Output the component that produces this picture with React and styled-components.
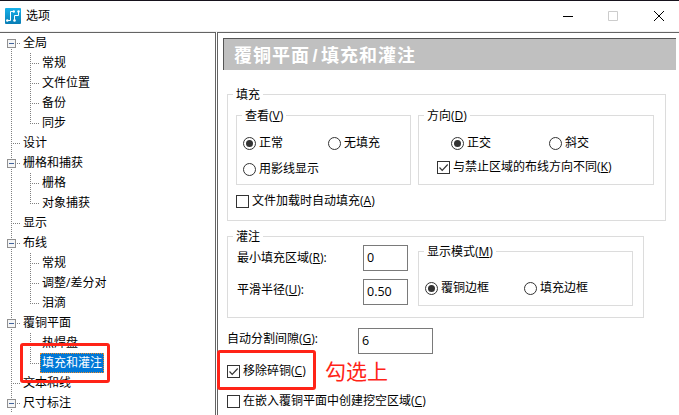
import React, { useState } from 'react'
import styled, { createGlobalStyle } from 'styled-components'

const GlobalStyle = createGlobalStyle`
  * {
    box-sizing: border-box;
  }
  body {
    margin: 0;
    background: #fff;
    overflow: hidden;
    font-family: 'Open Sans', 'Noto Sans CJK SC', sans-serif;
    font-size: 12px;
    color: #000;
  }
`

const Window = styled.div`
  position: relative;
  width: 679px;
  height: 415px;
  overflow: hidden;
  border-top: 1px solid #16121c;
`

const TitleBar = styled.header`
  display: flex;
  align-items: center;
  height: 31px;
  padding-left: 5px;
  border-bottom: 1px solid #f0f0f0;
`

const Title = styled.span`
  flex: 1;
  margin-left: 5px;
  line-height: 16px;
`

const WindowButton = styled.button`
  display: flex;
  width: 46px;
  height: 28px;
  padding: 0 0 0 ${(p) => p.$shift || 0}px;
  border: 0;
  background: none;
  align-items: center;
  justify-content: center;

  &:last-child {
    width: 43px;
  }
`

const Content = styled.div`
  display: flex;
  gap: 1px;
  height: 383px;
`

const Tree = styled.nav`
  width: 216px;
  border-top: 1px solid #646464;
  border-right: 1px solid #646464;
  overflow: hidden;
`

const TreeRow = styled.div`
  display: flex;
  align-items: center;
  height: 20px;
`

const TreeText = styled.span`
  height: 20px;
  margin-left: ${(p) => (p.$child ? 0 : 1)}px;
  padding: 0 1px;
  line-height: 18px;
  white-space: nowrap;
  border: 1px ${(p) => (p.$selected ? 'dotted #f08a28' : 'solid transparent')};
  background: ${(p) => (p.$selected ? '#0078d7' : 'none')};
  color: ${(p) => (p.$selected ? '#fff' : '#000')};
`

const Page = styled.main`
  flex: 1;
  padding: 5px 3px 0 5px;
  border-top: 1px solid #646464;
  border-left: 1px solid #646464;
`

const Banner = styled.h1`
  height: 32px;
  margin: 0 0 24px;
  padding-left: 10px;
  border-top: 1px solid #555;
  border-left: 1px solid #555;
  background: #c0c0c0;
  color: #fff;
  font-family: 'Liberation Sans', 'Noto Sans CJK SC', sans-serif;
  font-size: 18px;
  font-weight: 700;
  line-height: 35px;
  letter-spacing: 1px;
  word-spacing: -3.5px;
  white-space: nowrap;
`

const Form = styled.div`
  padding-left: 4px;
`

const Group = styled.section`
  width: ${(p) => p.$w}px;
  height: ${(p) => p.$h}px;
  padding-left: 8px;
  border: 1px solid #dcdcdc;
`

const Legend = styled.div`
  width: fit-content;
  height: 16px;
  margin: -8px 0 0 -3px;
  padding: 0 3px;
  line-height: 16px;
  background: #fff;
  white-space: nowrap;
`

const Columns = styled.div`
  display: flex;
  gap: ${(p) => p.$gap || 0}px;
  margin-top: ${(p) => p.$top || 0}px;
`

const Line = styled.div`
  display: flex;
  align-items: center;
  height: ${(p) => p.$h || 16}px;
  margin-top: ${(p) => p.$top || 0}px;
  padding-left: ${(p) => p.$left || 0}px;
`

const Option = styled.label`
  display: flex;
  align-items: center;
  gap: 3px;
  width: ${(p) => (p.$w ? p.$w + 'px' : 'auto')};
  height: 16px;
  line-height: 16px;
  white-space: nowrap;
`

// radio rows start a little further left than the legend text
const RadioLine = styled(Line)`
  margin-left: -2px;
`

const Label = styled.label`
  width: ${(p) => p.$w}px;
  padding-bottom: ${(p) => p.$lift || 0}px;
  line-height: 16px;
  white-space: nowrap;
`

const Input = styled.input`
  width: ${(p) => p.$w}px;
  height: 26px;
  padding: 0 0 2px 3px;
  border: 1px solid #7a7a7a;
  outline: 0;
  font: 12.5px 'Open Sans', sans-serif;
  color: #000;
`

const Marker = styled.div`
  position: absolute;
  left: ${(p) => p.$x}px;
  top: ${(p) => p.$y}px;
  width: ${(p) => p.$w}px;
  height: ${(p) => p.$h}px;
  border: 3px solid #ff2317;
  border-radius: 3px;
`

const Note = styled.div`
  position: absolute;
  left: 325px;
  top: 354px;
  color: #ff2317;
  font-size: 21px;
  line-height: 32px;
`

const Logo = () => (
  <svg width="16" height="16" viewBox="0 0 16 16">
    <defs>
      <linearGradient id="logo" x1="0" y1="0" x2="0" y2="1">
        <stop offset="0" stopColor="#16b1ea" />
        <stop offset="1" stopColor="#087db5" />
      </linearGradient>
    </defs>
    <rect width="16" height="16" rx="1" fill="url(#logo)" />
    <path d="M2 12.500h3.500V3.500h3M9.500 12.500V7.500h4V4" fill="none" stroke="#fff" />
    <circle cx="2.300" cy="12.500" r="1.200" fill="#fff" />
    <circle cx="9.500" cy="12.500" r="1.300" fill="#fff" />
    <circle cx="8.800" cy="3.500" r="1.200" fill="#fff" />
    <circle cx="13.500" cy="3.500" r="1.200" fill="#fff" />
  </svg>
)

// dotted connectors and the expander in front of a tree item
const Branch = ({ child, open, first, last }) => (
  <svg width={child ? 40 : 20} height="20" shapeRendering="crispEdges">
    <g stroke="#808080" strokeDasharray="1 1" fill="none">
      <path d={`M11.5 ${first ? 10 : 0}V20`} />
      {child && <path d={`M30.5 0V${last ? 10 : 20}M30 10.500H39`} />}
      {!child && <path d="M11 10.500H20" />}
    </g>
    {open && (
      <>
        <rect x="7.500" y="6.500" width="8" height="8" rx="1" fill="#f5f5f5" stroke="#919191" />
        <path d="M9 10.500h5" stroke="#41639b" />
      </>
    )}
  </svg>
)

const RadioMark = ({ on }) => (
  <svg width="13" height="13">
    <circle cx="6.500" cy="6.500" r="6" fill="#fff" stroke="#333" />
    {on && <circle cx="6.500" cy="6.500" r="3.500" fill="#333" />}
  </svg>
)

const CheckMark = ({ on }) => (
  <svg width="13" height="13">
    <rect x="0.500" y="0.500" width="12" height="12" fill="#fff" stroke="#333" />
    {on && <path d="M2.500 6.500l2.700 2.800L10.700 3.500" fill="none" stroke="#333" strokeWidth="1.200" />}
  </svg>
)

const Key = ({ k }) => (
  <>
    (<u>{k}</u>)
  </>
)

const items = [
  { text: '全局', open: true, first: true },
  { text: '常规', child: true },
  { text: '文件位置', child: true },
  { text: '备份', child: true },
  { text: '同步', child: true, last: true },
  { text: '设计' },
  { text: '栅格和捕获', open: true },
  { text: '栅格', child: true },
  { text: '对象捕获', child: true, last: true },
  { text: '显示' },
  { text: '布线', open: true },
  { text: '常规', child: true },
  { text: '调整/差分对', child: true },
  { text: '泪滴', child: true, last: true },
  { text: '覆铜平面', open: true },
  { text: '热焊盘', child: true },
  { text: '填充和灌注', child: true, last: true },
  { text: '文本和线' },
  { text: '尺寸标注', open: true },
]

const App = () => {
  const [selected, setSelected] = useState(16)
  const [view, setView] = useState(0)
  const [direction, setDirection] = useState(0)
  const [mode, setMode] = useState(0)
  const [checks, setChecks] = useState({ K: true, A: false, C: true, hole: false })
  const toggle = (name) => setChecks({ ...checks, [name]: !checks[name] })

  return (
    <>
      <GlobalStyle />
      <Window>
        <TitleBar>
          <Logo />
          <Title>选项</Title>
          <WindowButton $shift={2}>
            <svg width="10" height="10" stroke="#000">
              <path d="M0 5.500h10" />
            </svg>
          </WindowButton>
          <WindowButton>
            <svg width="10" height="10" stroke="#ccc" fill="none">
              <path d="M.5 .5h9v9h-9z" />
            </svg>
          </WindowButton>
          <WindowButton $shift={3}>
            <svg width="10" height="10" stroke="#000">
              <path d="M0 0l10 10M10 0L0 10" />
            </svg>
          </WindowButton>
        </TitleBar>
        <Content>
          <Tree>
            {items.map((item, i) => (
              <TreeRow key={i} onClick={() => setSelected(i)}>
                <Branch {...item} />
                <TreeText $child={item.child} $selected={i === selected}>
                  {item.text}
                </TreeText>
              </TreeRow>
            ))}
          </Tree>
          <Page>
            <Banner>覆铜平面 / 填充和灌注</Banner>
            <Form>
              <Group $w={439} $h={127}>
                <Legend>填充</Legend>
                <Columns $top={12} $gap={7}>
                  <Group $w={175} $h={70}>
                    <Legend>查看<Key k="V" /></Legend>
                    <RadioLine $top={11}>
                      <Option $w={85} onClick={() => setView(0)}><RadioMark on={view === 0} />正常</Option>
                      <Option onClick={() => setView(1)}><RadioMark on={view === 1} />无填充</Option>
                    </RadioLine>
                    <RadioLine $top={10}>
                      <Option onClick={() => setView(2)}><RadioMark on={view === 2} />用影线显示</Option>
                    </RadioLine>
                  </Group>
                  <Group $w={236} $h={70}>
                    <Legend>方向<Key k="D" /></Legend>
                    <RadioLine $top={11} $left={26}>
                      <Option $w={98} onClick={() => setDirection(0)}><RadioMark on={direction === 0} />正交</Option>
                      <Option onClick={() => setDirection(1)}><RadioMark on={direction === 1} />斜交</Option>
                    </RadioLine>
                    <Line $top={8} $left={10}>
                      <Option onClick={() => toggle('K')}>
                        <CheckMark on={checks.K} />
                        <span>与禁止区域的布线方向不同<Key k="K" /></span>
                      </Option>
                    </Line>
                  </Group>
                </Columns>
                <Line $top={8}>
                  <Option onClick={() => toggle('A')}>
                    <CheckMark on={checks.A} />
                    <span>文件加载时自动填充<Key k="A" /></span>
                  </Option>
                </Line>
              </Group>

              <Columns $top={15}>
                <Group $w={417} $h={82}>
                  <Legend>灌注</Legend>
                  <Columns $gap={10}>
                    <div>
                      <Line $h={26} $left={1}>
                        <Label $w={126}>最小填充区域<Key k="R" />:</Label>
                        <Input $w={45} defaultValue="0" />
                      </Line>
                      <Line $h={26} $top={8} $left={1}>
                        <Label $w={126} $lift={4}>平滑半径<Key k="U" />:</Label>
                        <Input $w={45} defaultValue="0.50" />
                      </Line>
                    </div>
                    <Columns $top={6}>
                      <Group $w={215} $h={55}>
                        <Legend>显示模式<Key k="M" /></Legend>
                        <RadioLine $top={20}>
                          <Option $w={99} onClick={() => setMode(0)}><RadioMark on={mode === 0} />覆铜边框</Option>
                          <Option onClick={() => setMode(1)}><RadioMark on={mode === 1} />填充边框</Option>
                        </RadioLine>
                      </Group>
                    </Columns>
                  </Columns>
                </Group>
              </Columns>

              <Line $h={26} $top={10}>
                <Label $w={131} $lift={4}>自动分割间隙<Key k="G" />:</Label>
                <Input $w={75} defaultValue="6" />
              </Line>
              <Line $top={9}>
                <Option onClick={() => toggle('C')}>
                  <CheckMark on={checks.C} />
                  <span>移除碎铜<Key k="C" /></span>
                </Option>
              </Line>
              <Line $top={14}>
                <Option onClick={() => toggle('hole')}>
                  <CheckMark on={checks.hole} />
                  <span>在嵌入覆铜平面中创建挖空区域<Key k="C" /></span>
                </Option>
              </Line>
            </Form>
          </Page>
        </Content>
        <Marker $x={20} $y={342} $w={90} $h={40} />
        <Marker $x={217} $y={349} $w={99} $h={40} />
        <Note>勾选上</Note>
      </Window>
    </>
  )
}

export default App
